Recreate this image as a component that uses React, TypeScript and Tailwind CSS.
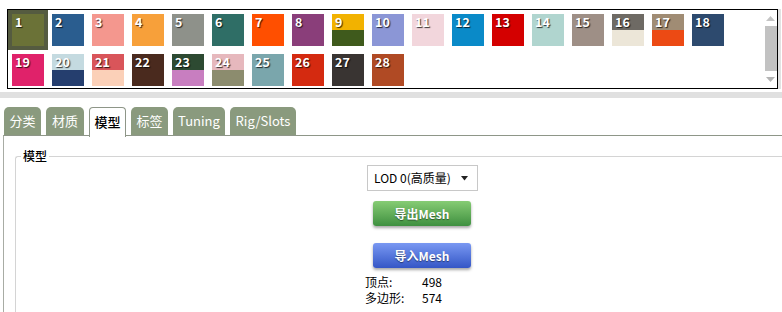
import React from 'react';

type Swatch = { n: number; top: string; bottom?: string };

const swatches: Swatch[] = [
  { n: 1, top: '#6b7237' },
  { n: 2, top: '#2a5d8f' },
  { n: 3, top: '#f4978e' },
  { n: 4, top: '#f7a03a' },
  { n: 5, top: '#8e918a' },
  { n: 6, top: '#2f6e66' },
  { n: 7, top: '#ff4f00' },
  { n: 8, top: '#8a3e7a' },
  { n: 9, top: '#f2b200', bottom: '#3f5a1c' },
  { n: 10, top: '#8b96d6' },
  { n: 11, top: '#f2d6dc' },
  { n: 12, top: '#0a8ac8' },
  { n: 13, top: '#d40000' },
  { n: 14, top: '#b0d5cf' },
  { n: 15, top: '#9e8f86' },
  { n: 16, top: '#6e6a64', bottom: '#ece6d8' },
  { n: 17, top: '#a08c74', bottom: '#ec4a14' },
  { n: 18, top: '#2d4a6e' },
  { n: 19, top: '#e0226a' },
  { n: 20, top: '#c4dae0', bottom: '#253e6e' },
  { n: 21, top: '#d9555a', bottom: '#fbd0b8' },
  { n: 22, top: '#4a2a1e' },
  { n: 23, top: '#2d4a32', bottom: '#c87ec0' },
  { n: 24, top: '#e6b8bd', bottom: '#8c8c6e' },
  { n: 25, top: '#7aa6ac' },
  { n: 26, top: '#d42a10' },
  { n: 27, top: '#393432' },
  { n: 28, top: '#b04a24' },
];

const tabs = [
  { label: '分类', w: 'w-[37px]' },
  { label: '材质', w: 'w-[38px]' },
  { label: '模型', w: 'w-[37px]', active: true },
  { label: '标签', w: 'w-[37px]' },
  { label: 'Tuning', w: 'w-[52px]' },
  { label: 'Rig/Slots', w: 'w-[66px]' },
];

const SwatchCell = ({ s, selected }: { s: Swatch; selected: boolean }) => (
  <div
    className={`w-[40px] h-[40px] flex items-center justify-center ${
      selected ? 'bg-[#555b40]' : ''
    }`}
  >
    <div className="relative w-[32px] h-[32px] flex flex-col">
      <div className="flex-1" style={{ background: s.top }} />
      {s.bottom && <div className="flex-1" style={{ background: s.bottom }} />}
      <span className="absolute left-[3px] top-[0px] text-[12.5px] leading-[16px] font-semibold text-white [text-shadow:1px_1px_1px_rgba(0,0,0,0.75)]">
        {s.n}
      </span>
    </div>
  </div>
);

export default function App() {
  return (
    <div className="w-[782px] h-[312px] bg-white overflow-hidden font-['Noto_Sans_CJK_SC','Noto_Sans',sans-serif] text-black">
      {/* Colour picker */}
      <div className="pt-[9px] pl-[7px] pr-[1px] flex items-start">
        <div className="flex-1 h-[80px] border border-black flex">
          <div className="w-[720px] h-[78px] flex flex-wrap content-start overflow-hidden">
            {swatches.map((s) => (
              <SwatchCell key={s.n} s={s} selected={s.n === 1} />
            ))}
          </div>
          <div className="ml-auto w-[13px] flex flex-col items-center pt-[5px] pb-[5px]">
            <svg width="11" height="7" viewBox="0 0 11 7">
              <path d="M5.5 1 L10 6 L1 6 Z" fill="#c4c4c4" />
            </svg>
            <div className="w-[12px] h-[45px] bg-[#c2c2c2] mt-[4px]" />
            <div className="flex-1" />
            <svg width="11" height="7" viewBox="0 0 11 7">
              <path d="M1 1 L10 1 L5.5 6 Z" fill="#b4b4b4" />
            </svg>
          </div>
        </div>
        <div className="w-[3px] h-[80px] bg-[#e2e2e2] ml-[0px]" />
      </div>

      <div className="h-[6px] mt-[3px] bg-[#e0e0e0]" />

      {/* Tabs */}
      <div className="mt-[9px] pl-[4px] flex items-end gap-[5px] h-[28px] relative z-10">
        {tabs.map((t) =>
          t.active ? (
            <div
              key={t.label}
              className={`${t.w} h-[30px] -mb-[2px] bg-white border border-b-0 border-[#8e9688] rounded-t-[4px] flex items-center justify-center text-[13px] font-medium text-black pb-[2px]`}
            >
              {t.label}
            </div>
          ) : (
            <div
              key={t.label}
              className={`${t.w} h-[28px] bg-[#8a9a7e] rounded-t-[5px] flex items-center justify-center text-[13px] text-white`}
            >
              {t.label}
            </div>
          )
        )}
      </div>

      {/* Panel */}
      <div className="ml-[3px] border-t border-l border-t-[#8e9688] border-l-[#a8aca4] h-[200px] pl-[11px] pt-[20px]">
        <div className="relative border-t border-l border-[#d4d4d4] rounded-tl-[3px] h-[200px]">
          <span className="absolute left-[5px] -top-[9px] px-[2px] bg-white text-[12px] leading-[16px] font-medium">
            模型
          </span>
          <div className="ml-[351px] pt-[8px] flex flex-col items-start">
            <div className="w-[111px] h-[26px] border border-[#c8c8c8] bg-white flex items-center pl-[6px] pr-[9px] text-[12px]">
              <span>LOD 0(高质量)</span>
              <svg className="ml-auto" width="7" height="5" viewBox="0 0 7 5">
                <path d="M0 0 L7 0 L3.5 4.5 Z" fill="#222" />
              </svg>
            </div>
            <button className="ml-[6px] mt-[10px] w-[98px] h-[25px] rounded-[3px] bg-gradient-to-b from-[#86cc74] to-[#3e9040] text-white font-bold text-[12px] [text-shadow:0_1px_1px_rgba(0,0,0,0.45)] shadow-[0_2px_3px_rgba(0,0,0,0.35)]">
              导出Mesh
            </button>
            <button className="ml-[6px] mt-[17px] w-[98px] h-[25px] rounded-[3px] bg-gradient-to-b from-[#7a98f2] to-[#3556c6] text-white font-bold text-[12px] [text-shadow:0_1px_1px_rgba(0,0,0,0.45)] shadow-[0_2px_3px_rgba(0,0,0,0.35)]">
              导入Mesh
            </button>
            <div className="mt-[6px] -ml-[2px] text-[12px] leading-[16px] flex flex-col">
              <div className="flex h-[16px] items-center">
                <span className="w-[57px]">顶点:</span>
                <span>498</span>
              </div>
              <div className="flex h-[16px] items-center">
                <span className="w-[57px]">多边形:</span>
                <span>574</span>
              </div>
            </div>
          </div>
        </div>
      </div>
    </div>
  );
}
